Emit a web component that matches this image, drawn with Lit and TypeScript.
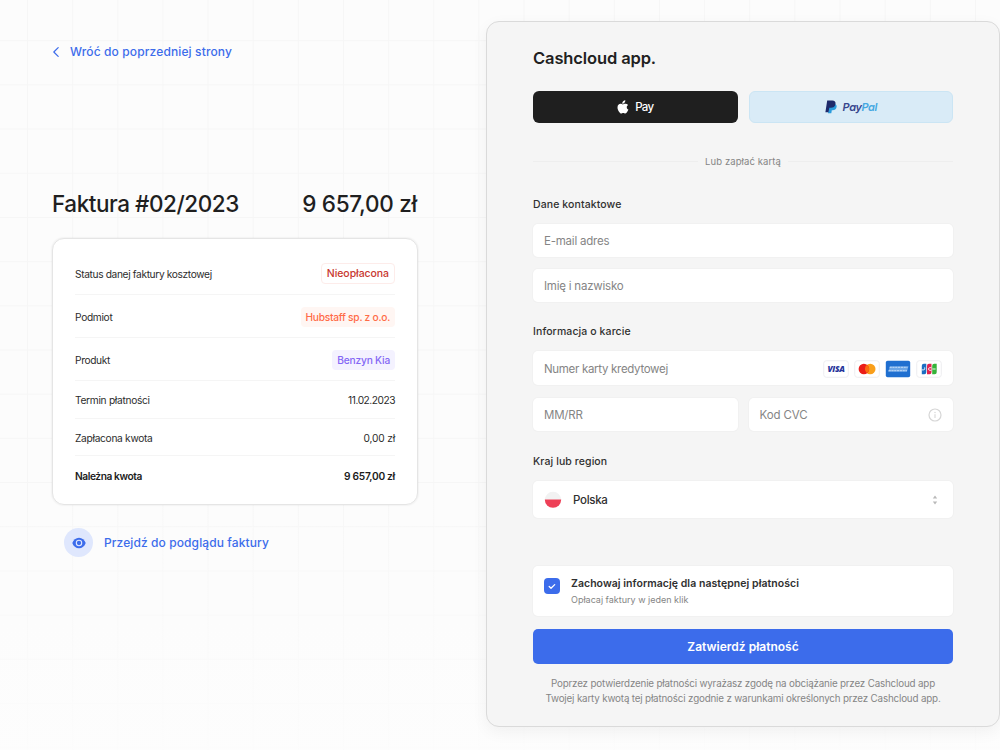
import { LitElement, html, css, svg } from "lit";
import { customElement } from "lit/decorators.js";
import { classMap } from "lit/directives/class-map.js";

interface Row {
  label: string;
  value: string;
  kind: string;
  key: string;
}

const ROWS: Row[] = [
  { label: "Status danej faktury kosztowej", value: "Nieopłacona", kind: "red", key: "status" },
  { label: "Podmiot", value: "Hubstaff sp. z o.o.", kind: "orange", key: "entity" },
  { label: "Produkt", value: "Benzyn Kia", kind: "violet", key: "product" },
  { label: "Termin płatności", value: "11.02.2023", kind: "", key: "due" },
  { label: "Zapłacona kwota", value: "0,00 zł", kind: "", key: "paid" },
  { label: "Należna kwota", value: "9 657,00 zł", kind: "", key: "total" },
];

const chevron = svg`<svg width="8" height="12" viewBox="0 0 8 12"><path d="M6.2 1.6 1.8 6l4.4 4.4" fill="none" stroke="#3c6ceb" stroke-width="1.2" stroke-linecap="round" stroke-linejoin="round"/></svg>`;

const eye = svg`<svg width="14" height="12" viewBox="0 0 14 12"><path d="M7 .7C3.900.7 1.300 2.900.3 6c1 3.100 3.600 5.300 6.700 5.300s5.700-2.200 6.700-5.300C12.700 2.900 10.100.7 7 .7Z" fill="#3c6ceb"/><circle cx="7" cy="6" r="2.700" fill="none" stroke="#dfe7fd" stroke-width="1.100"/></svg>`;

const apple = svg`<svg width="12" height="14" viewBox="0 0 12 14"><path d="M8.300.2c.1 1-.300 1.900-.9 2.500-.6.7-1.400 1-2.100.95-.1-.95.3-1.850.85-2.400C6.750.6 7.600.25 8.300.2Z M11.100 4.900c-.9.55-1.350 1.250-1.350 2.250 0 1.200.7 2 1.650 2.400-.3.900-.75 1.700-1.300 2.500-.5.700-1 1.400-1.800 1.400s-1.100-.5-2.050-.5-1.300.5-2.050.5c-.85 0-1.450-.7-2-1.500C1.200 10.600.5 9 .5 7.450.500 5.100 2 3.800 3.600 3.800c.9 0 1.700.6 2.250.6.550 0 1.450-.65 2.550-.65 1.100.05 2.050.400 2.700 1.150Z" fill="#fff"/></svg>`;

const paypal = svg`<svg width="12" height="14" viewBox="0 0 12 14"><path d="M4.200 4h5.100c1.900.1 2.700 1.400 2.300 3.100-.5 2.200-1.900 3.100-3.900 3.100h-.9l-.5 3H3Z" fill="#2a9bdc"/><path d="M2.200.5h5.100c2.300 0 3.600 1.200 3.200 3.500C10 6.700 8.300 7.800 6 7.800H4.300l-.8 4.400H.4Z" fill="#1e2a6b"/></svg>`;

const visa = svg`<svg width="26" height="18" viewBox="0 0 26 18"><rect x=".75" y=".75" width="24.500" height="16.500" rx="2.500" fill="#fff" stroke="#ededf0"/><text x="13" y="12" text-anchor="middle" textLength="17" lengthAdjust="spacingAndGlyphs" font-family="Open Sans, sans-serif" font-size="8.500" font-weight="800" font-style="italic" fill="#26349a">VISA</text></svg>`;

const mastercard = svg`<svg width="26" height="18" viewBox="0 0 26 18"><rect x=".75" y=".75" width="24.500" height="16.500" rx="2.500" fill="#fff" stroke="#ededf0"/><circle cx="16.200" cy="9" r="5.300" fill="#f99f1b"/><circle cx="9.900" cy="9" r="5.300" fill="#eb1c18"/><path d="M13.050 4.750a5.300 5.300 0 0 1 0 8.500 5.300 5.300 0 0 1 0-8.500Z" fill="#fb6a10"/></svg>`;

const amex = svg`<svg width="26" height="18" viewBox="0 0 26 18"><rect x=".8" y=".8" width="24.400" height="16.400" rx="1.800" fill="#1f6fd0"/><path d="M5 6.200h18.500l-1.600 5.600H3.200Z" fill="#6ba5e6"/><path d="M4.600 7.300h17.800M3.600 10.700h18.300" stroke="#c2dbf7" stroke-width="1" stroke-dasharray="2.200 .6"/></svg>`;

const jcb = svg`<svg width="26" height="18" viewBox="0 0 26 18"><rect x=".75" y=".75" width="24.500" height="16.500" rx="2.500" fill="#fff" stroke="#ededf0"/><path d="M7.800 3.700h2.500v8.600a2 2 0 0 1-2 2H5.800V5.700a2 2 0 0 1 2-2Z" fill="#1b6dc1"/><path d="M13 3.700h2.500v8.600a2 2 0 0 1-2 2H11V5.700a2 2 0 0 1 2-2Z" fill="#e0224e"/><path d="M18.200 3.700h2.500v8.600a2 2 0 0 1-2 2h-2.500V5.700a2 2 0 0 1 2-2Z" fill="#35b339"/><path d="M6 9.900h1.400c.9 0 1.300-.4 1.300-1.100V7.400M15.300 7.700h-1.800c-1.200 0-1.200 2.600 0 2.600h1.800M16.400 9h3.200" fill="none" stroke="#fff" stroke-width=".9"/></svg>`;

const info = svg`<svg width="14" height="14" viewBox="0 0 14 14"><circle cx="7" cy="7" r="6" fill="none" stroke="#d6d6d6" stroke-width="1.200"/><path d="M7 6.300v3.700" stroke="#dadada" stroke-width="1.200"/><circle cx="7" cy="4.400" r=".75" fill="#dadada"/></svg>`;

const flag = svg`<svg width="18" height="18" viewBox="0 0 18 18"><path d="M.8 9a8.200 8.200 0 0 1 16.400 0Z" fill="#f2f2f2"/><path d="M.8 8.600h16.400a8.200 8.200 0 0 1-16.400 0Z" fill="#ee4057"/></svg>`;

const sorter = svg`<svg width="6" height="10" viewBox="0 0 6 10"><path d="M3 .6 5.200 3.600H.8ZM3 9.400.8 6.400h4.400Z" fill="#b9b9b9"/></svg>`;

const check = svg`<svg width="8" height="7" viewBox="0 0 8 7"><path d="M1.200 3.500 3 5.200 6.700 1.600" fill="none" stroke="#fff" stroke-width="1.300" stroke-linecap="round" stroke-linejoin="round"/></svg>`;

@customElement("app-root")
export class AppRoot extends LitElement {
  static styles = css`
    :host {
      display: block;
      font-family: Inter, "Noto Sans", sans-serif;
      color: #222;
    }
    * { box-sizing: border-box; }
    svg { display: block; flex: none; }
    .page {
      display: flex;
      width: 1000px;
      height: 750px;
      overflow: hidden;
      white-space: nowrap;
      background:
        linear-gradient(to bottom, rgba(252,252,252,0) 480px, rgba(252,252,252,.5) 620px, rgba(253,253,253,.8) 748px),
        linear-gradient(to right, #f6f6f6 1.300px, transparent 1.300px) 27px 0 / 45.150px 100%,
        linear-gradient(to bottom, #f6f6f6 1.300px, transparent 1.300px) 0 -4px / 100% 44.200px,
        #fcfcfc;
    }
    .left {
      width: 486px;
      padding: 41px 0 0 52px;
    }
    .back {
      display: flex;
      align-items: center;
      gap: 10px;
      height: 21px;
      color: #3c6ceb;
      font-size: 12px;
      font-weight: 500;
      letter-spacing: .13px;
    }
    .heading {
      display: flex;
      justify-content: space-between;
      align-items: center;
      width: 365px;
      height: 30px;
      margin: 126px 0 20px;
      font-size: 22.500px;
      font-weight: 500;
      color: #1f1f1f;
      letter-spacing: -.45px;
    }
    .amount { letter-spacing: -.27px; }
    .card {
      width: 366px;
      height: 267px;
      padding: 13px 22px 0;
      border: 1px solid #e5e5e5;
      border-radius: 12px;
      background: #fff;
      box-shadow: 0 0 1.500px 1px rgba(0,0,0,.04);
    }
    .row {
      display: flex;
      align-items: center;
      justify-content: space-between;
      height: 37.500px;
      padding-top: 2px;
      border-bottom: 1px solid #f5f5f5;
      font-size: 10.200px;
      letter-spacing: -.3px;
      color: #2c2c2c;
    }
    .row.tall { height: 43px; padding-top: 1px; }
    .row.total { border-bottom: none; font-weight: 600; color: #1c1c1c; }
    .label.status { letter-spacing: -.36px; }
    .label.entity { letter-spacing: -.32px; }
    .label.product { letter-spacing: -.36px; }
    .label.total { letter-spacing: -.43px; }
    .value.due { letter-spacing: -.48px; }
    .value.paid { letter-spacing: -.17px; }
    .value.total { letter-spacing: -.28px; }
    .badge {
      display: flex;
      align-items: center;
      height: 20px;
      border-radius: 4px;
      font-weight: 500;
    }
    .red { padding: 0 5px; border: 1px solid #fdecea; color: #c8372f; font-size: 10.500px; letter-spacing: -.06px; height: 21px; }
    .orange { padding: 0 5px; background: #fff6f3; color: #ff6b47; letter-spacing: -.25px; }
    .violet { padding: 0 5px; background: #f4f2ff; color: #8467f5; letter-spacing: -.2px; }
    .preview {
      display: flex;
      align-items: center;
      gap: 11px;
      margin: 23px 0 0 12px;
      color: #3c6ceb;
      font-size: 12px;
      font-weight: 500;
      letter-spacing: .1px;
    }
    .disc {
      display: grid;
      place-items: center;
      width: 29px;
      height: 29px;
      border-radius: 50%;
      background: #dfe7fd;
    }
    .panel {
      width: 514px;
      height: 706px;
      margin-top: 21px;
      padding: 24px 46px 0;
      border: 1px solid #dadada;
      border-radius: 13px;
      background: #f5f5f5;
      box-shadow: 0 5px 16px rgba(0,0,0,.05);
    }
    .brand {
      height: 24px;
      line-height: 24px;
      font-size: 16.500px;
      font-weight: 600;
      letter-spacing: -.12px;
      color: #212121;
    }
    .pair { display: grid; grid-template-columns: 1fr 1fr; gap: 11px; }
    .wallets { margin-top: 21px; }
    .wallet {
      display: flex;
      align-items: center;
      justify-content: center;
      height: 32px;
      border-radius: 6px;
      font-size: 11.500px;
      font-weight: 500;
      gap: 6px;
    }
    .apple { background: #1f1f1f; color: #fff; letter-spacing: -.7px; }
    .paypal {
      background: #d9ebf7;
      border: 1px solid #cbe5f4;
      color: #37458c;
      font-style: italic;
      font-weight: 600;
      font-size: 11px;
      letter-spacing: -.45px;
    }
    .pal { color: #45a8e2; }
    .or {
      display: flex;
      align-items: center;
      height: 20px;
      gap: 7px;
      margin: 28px 0 24px;
      color: #858585;
      font-size: 9.500px;
      letter-spacing: .1px;
    }
    .line { flex: 1; height: 1px; background: #eeeeee; }
    .section {
      height: 20px;
      line-height: 20px;
      font-size: 10.500px;
      font-weight: 500;
      letter-spacing: .1px;
      color: #303030;
    }
    .field {
      display: flex;
      align-items: center;
      justify-content: space-between;
      height: 33px;
      padding: 1px 11px 0;
      border-radius: 5px;
      background: #fff;
      box-shadow: 0 0 0 1px #f1f1f1;
      color: #858585;
      font-size: 11.500px;
      letter-spacing: -.22px;
    }
    .first { margin: 9px 0 12px; }
    .second { margin-bottom: 20px; }
    .number { margin: 9px 0 13px; letter-spacing: -.31px; height: 34px; }
    .details { margin-bottom: 21px; }
    .details .field { height: 33px; }
    .cvc { letter-spacing: -.1px; }
    .brands { display: flex; gap: 5px; }
    .country {
      justify-content: flex-start;
      height: 37px;
      margin: 9px 0 48px;
      gap: 11px;
      color: #303030;
      font-weight: 500;
      letter-spacing: -.3px;
    }
    .sort { margin-left: auto; margin-right: 4px; }
    .save {
      display: flex;
      gap: 11px;
      height: 50px;
      padding: 12px 11px 0;
      border-radius: 5px;
      background: #fff;
      box-shadow: 0 0 0 1px #f1f1f1;
    }
    .box {
      display: grid;
      place-items: center;
      width: 16px;
      height: 16px;
      border-radius: 4px;
      background: #3c6ceb;
    }
    .save-title { height: 12px; line-height: 12px; font-size: 10.500px; font-weight: 600; letter-spacing: .05px; color: #303030; }
    .save-note { margin-top: 4px; height: 12px; line-height: 12px; font-size: 9px; color: #858585; }
    .confirm {
      display: grid;
      place-items: center;
      width: 100%;
      height: 35px;
      margin: 13px 0 13px;
      padding: 0;
      border: none;
      border-radius: 5px;
      background: #3c6ceb;
      color: #fff;
      font-family: inherit;
      font-size: 12px;
      font-weight: 600;
    }
    .legal {
      text-align: center;
      font-size: 9.800px;
      line-height: 14.500px;
      letter-spacing: -.17px;
      color: #858585;
    }
  `;

  private row(r: Row) {
    const badge = r.kind !== "";
    return html`<div class=${classMap({ row: true, tall: badge, total: r.key === "total" })}>
      <span class="label ${r.key}">${r.label}</span>
      <span class=${badge ? `badge ${r.kind}` : `value ${r.key}`}>${r.value}</span>
    </div>`;
  }

  render() {
    return html`<div class="page">
      <section class="left">
        <div class="back">${chevron}<span>Wróć do poprzedniej strony</span></div>
        <div class="heading"><span>Faktura #02/2023</span><span class="amount">9 657,00 zł</span></div>
        <div class="card">${ROWS.map((r) => this.row(r))}</div>
        <div class="preview"><span class="disc">${eye}</span><span>Przejdź do podglądu faktury</span></div>
      </section>
      <section class="panel">
        <div class="brand">Cashcloud app.</div>
        <div class="pair wallets">
          <div class="wallet apple">${apple}<span>Pay</span></div>
          <div class="wallet paypal">${paypal}<span>Pay<span class="pal">Pal</span></span></div>
        </div>
        <div class="or"><span class="line"></span><span>Lub zapłać kartą</span><span class="line"></span></div>
        <div class="section">Dane kontaktowe</div>
        <div class="field first">E-mail adres</div>
        <div class="field second">Imię i nazwisko</div>
        <div class="section">Informacja o karcie</div>
        <div class="field number"><span>Numer karty kredytowej</span><span class="brands">${visa}${mastercard}${amex}${jcb}</span></div>
        <div class="pair details">
          <div class="field">MM/RR</div>
          <div class="field cvc"><span>Kod CVC</span>${info}</div>
        </div>
        <div class="section">Kraj lub region</div>
        <div class="field country">${flag}<span>Polska</span><span class="sort">${sorter}</span></div>
        <div class="save">
          <span class="box">${check}</span>
          <div>
            <div class="save-title">Zachowaj informację dla następnej płatności</div>
            <div class="save-note">Opłacaj faktury w jeden klik</div>
          </div>
        </div>
        <button class="confirm">Zatwierdź płatność</button>
        <div class="legal">Poprzez potwierdzenie płatności wyrażasz zgodę na obciążanie przez Cashcloud app<br />Twojej karty kwotą tej płatności zgodnie z warunkami określonych przez Cashcloud app.</div>
      </section>
    </div>`;
  }
}
